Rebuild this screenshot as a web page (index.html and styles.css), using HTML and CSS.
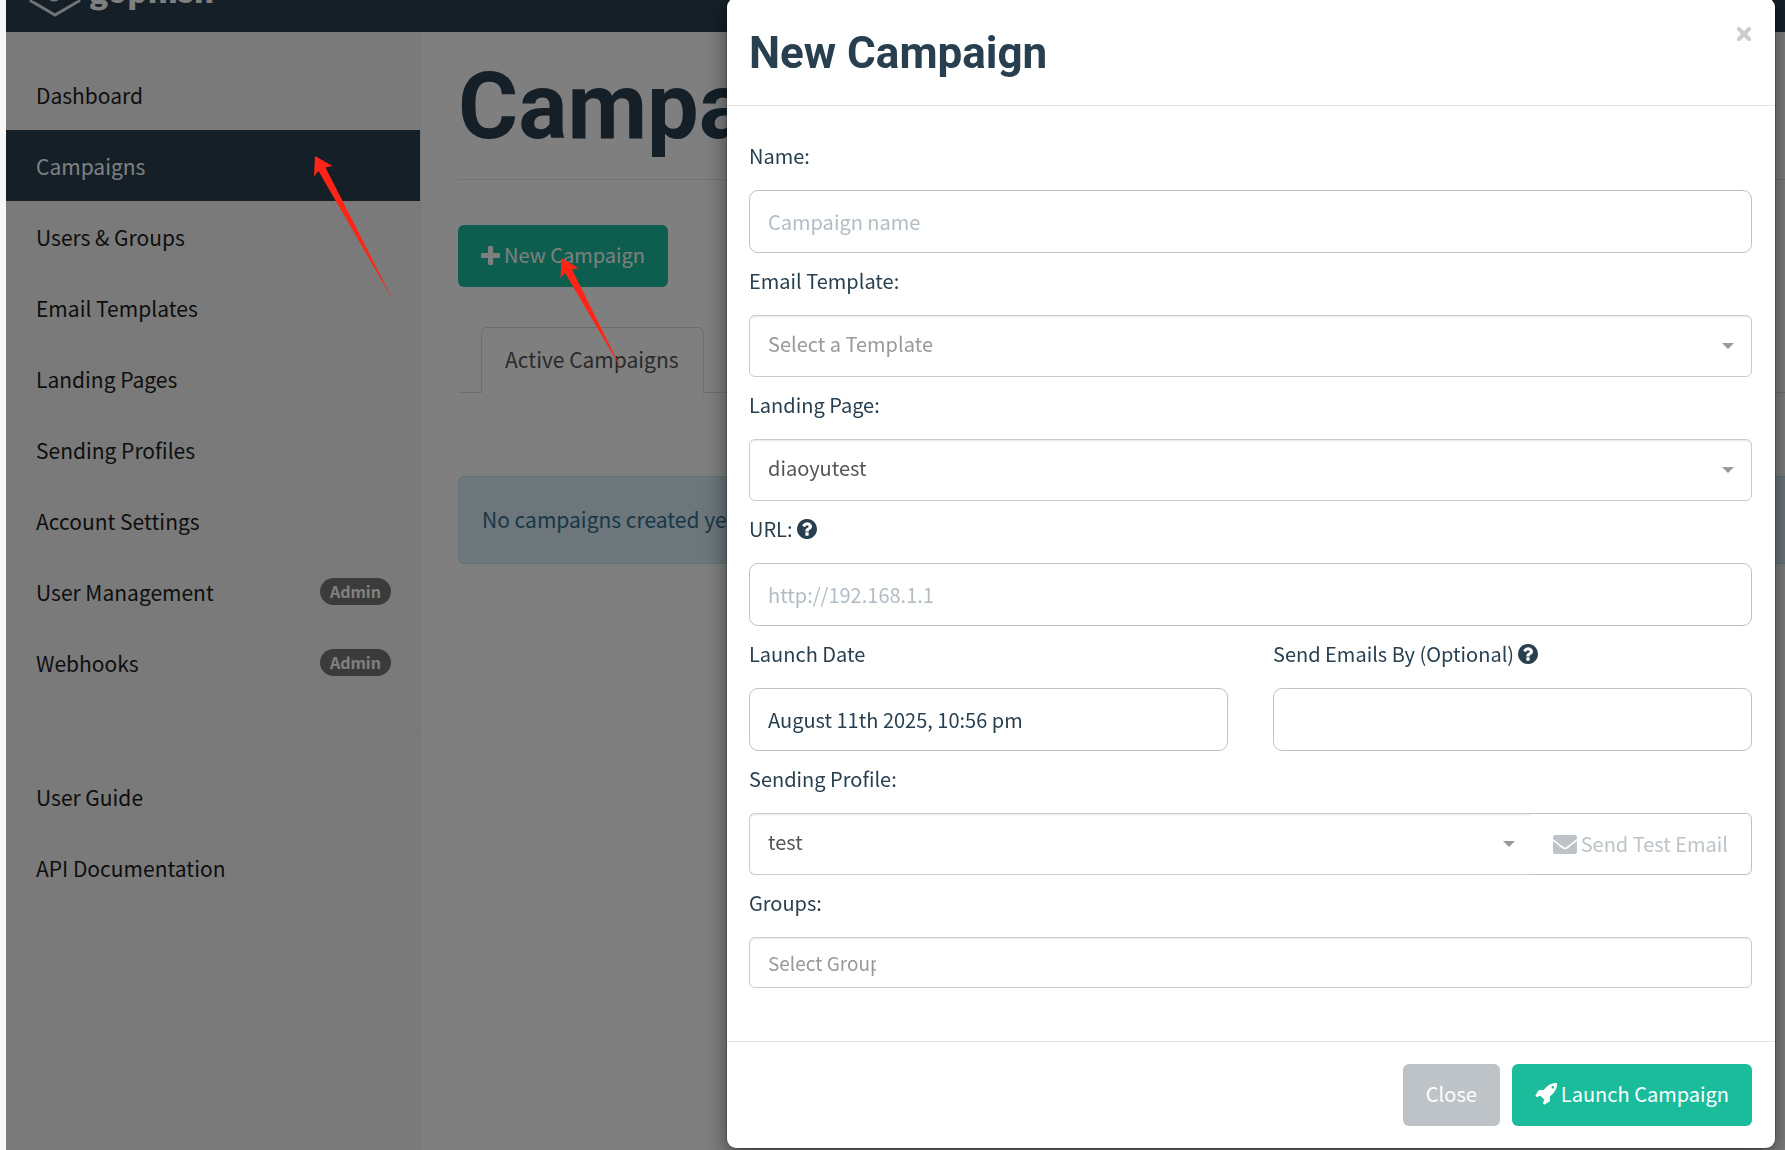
FILE: index.html
```html
<!DOCTYPE html>
<html lang="en">
<head>
  <meta charset="UTF-8" />
  <meta name="viewport" content="width=device-width, initial-scale=1.0" />
  <title>Campaigns - Gophish</title>
  <link rel="stylesheet" href="styles.css">
</head>

<body>
  <div class="app">
    <header class="navbar">
      <a class="brand" href="#">
        <svg class="brand-icon" viewBox="0 0 52 60" aria-hidden="true">
          <path d="M26 2 L50 16 V44 L26 58 L2 44 V16 Z" fill="none" stroke="#e5e8ea" stroke-width="3"/>
          <circle cx="25" cy="37" r="6" fill="none" stroke="#e5e8ea" stroke-width="3"/>
        </svg>
        <span>gophish</span>
      </a>
    </header>

    <div class="layout">
      <nav class="sidebar">
        <a href="#">Dashboard</a>
        <a href="#" class="active">Campaigns</a>
        <a href="#">Users &amp; Groups</a>
        <a href="#">Email Templates</a>
        <a href="#">Landing Pages</a>
        <a href="#">Sending Profiles</a>
        <a href="#">Account Settings</a>
        <a href="#">User Management <span class="badge">Admin</span></a>
        <a href="#">Webhooks <span class="badge">Admin</span></a>
        <hr>
        <a href="#">User Guide</a>
        <a href="#">API Documentation</a>
      </nav>

      <main class="content">
        <h1>Campaigns</h1>
        <button type="button" class="btn btn-primary">
          <svg class="icon-plus" viewBox="192 128 1408 1408" aria-hidden="true"><path d="M1600 736v192q0 40-28 68t-68 28h-416v416q0 40-28 68t-68 28h-192q-40 0-68-28t-28-68v-416h-416q-40 0-68-28t-28-68v-192q0-40 28-68t68-28h416v-416q0-40 28-68t68-28h192q40 0 68 28t28 68v416h416q40 0 68 28t28 68z"/></svg>
          New Campaign
        </button>
        <div class="tabs">
          <a href="#" class="tab">Active Campaigns</a>
        </div>
        <div class="alert">No campaigns created yet. Let's create one!</div>
      </main>
    </div>
  </div>

  <div class="backdrop">
    <form class="modal" role="dialog" aria-labelledby="modal-title">
      <div class="modal-header">
        <h2 id="modal-title">New Campaign</h2>
        <button type="button" class="close" aria-label="Close">
          <svg viewBox="0 0 14 14" aria-hidden="true"><path d="M2 2 L12 12 M12 2 L2 12"/></svg>
        </button>
      </div>

      <div class="modal-body">
        <label for="name">Name:</label>
        <input type="text" id="name" class="form-control" placeholder="Campaign name">

        <label for="template">Email Template:</label>
        <div class="select">
          <select id="template" class="empty">
            <option>Select a Template</option>
          </select>
        </div>

        <label for="page">Landing Page:</label>
        <div class="select">
          <select id="page">
            <option>diaoyutest</option>
          </select>
        </div>

        <label for="url">URL:
          <svg class="icon-help" viewBox="0 0 1536 1536" aria-hidden="true"><path d="M896 1248v-192q0-14-9-23t-23-9h-192q-14 0-23 9t-9 23v192q0 14 9 23t23 9h192q14 0 23-9t9-23zm256-672q0-88-55.500-163t-138.500-116-170-41q-243 0-371 213-15 24 8 42l132 100q7 6 19 6 16 0 25-12 53-68 86-92 34-24 86-24 48 0 85.500 26t37.500 59q0 38-20 61t-68 45q-63 28-115.500 86.500t-52.500 125.500v36q0 14 9 23t23 9h192q14 0 23-9t9-23q0-19 21.500-49.500t54.500-49.500q32-18 49-28.500t46-35 44.500-48 28-60.500 12.500-81zm384 192q0 209-103 385.500t-279.500 279.500-385.500 103-385.500-103-279.500-279.500-103-385.500 103-385.500 279.500-279.500 385.500-103 385.500 103 279.500 279.500 103 385.500z"/></svg>
        </label>
        <input type="text" id="url" class="form-control" placeholder="http://192.168.1.1">

        <div class="row">
          <div class="col">
            <label for="launch">Launch Date</label>
            <input type="text" id="launch" class="form-control" value="August 11th 2025, 10:56 pm">
          </div>
          <div class="col">
            <label for="send-by">Send Emails By (Optional)
              <svg class="icon-help" viewBox="0 0 1536 1536" aria-hidden="true"><path d="M896 1248v-192q0-14-9-23t-23-9h-192q-14 0-23 9t-9 23v192q0 14 9 23t23 9h192q14 0 23-9t9-23zm256-672q0-88-55.500-163t-138.500-116-170-41q-243 0-371 213-15 24 8 42l132 100q7 6 19 6 16 0 25-12 53-68 86-92 34-24 86-24 48 0 85.500 26t37.500 59q0 38-20 61t-68 45q-63 28-115.500 86.500t-52.500 125.500v36q0 14 9 23t23 9h192q14 0 23-9t9-23q0-19 21.500-49.500t54.500-49.500q32-18 49-28.500t46-35 44.500-48 28-60.500 12.500-81zm384 192q0 209-103 385.500t-279.500 279.500-385.500 103-385.500-103-279.500-279.500-103-385.500 103-385.500 279.500-279.500 385.500-103 385.500 103 279.500 279.500 103 385.500z"/></svg>
            </label>
            <input type="text" id="send-by" class="form-control">
          </div>
        </div>

        <label for="profile">Sending Profile:</label>
        <div class="input-group">
          <div class="select">
            <select id="profile">
              <option>test</option>
            </select>
          </div>
          <button type="button" class="btn btn-test">
            <svg class="icon-mail" viewBox="0 64 512 384" preserveAspectRatio="none" aria-hidden="true"><path d="M502.300 190.800c3.900-3.100 9.700-.2 9.700 4.700V400c0 26.500-21.500 48-48 48H48c-26.500 0-48-21.500-48-48V195.600c0-5 5.700-7.800 9.700-4.700 22.400 17.400 52.100 39.500 154.100 113.600 21.100 15.400 56.700 47.800 92.200 47.600 35.700.3 72-32.800 92.300-47.600 102-74.100 131.600-96.300 154-113.700zM256 320c23.200.4 56.600-29.200 73.400-41.400 132.700-96.300 142.800-104.700 173.400-128.700 5.800-4.500 9.200-11.500 9.200-18.900v-19c0-26.500-21.500-48-48-48H48c-26.500 0-48 21.500-48 48v19c0 7.400 3.400 14.300 9.200 18.900 30.600 23.900 40.700 32.400 173.400 128.700 16.800 12.200 50.200 41.800 73.400 41.400z"/></svg>
            Send Test Email
          </button>
        </div>

        <label for="groups">Groups:</label>
        <div class="tags">
          <input type="text" id="groups" placeholder="Select Group">
        </div>
      </div>

      <div class="modal-footer">
        <button type="button" class="btn btn-default">Close</button>
        <button type="button" class="btn btn-primary">
          <svg class="icon-rocket" viewBox="0 128 1664 1664" aria-hidden="true"><path d="M1440 448q0-40-28-68t-68-28-68 28-28 68 28 68 68 28 68-28 28-68zm224-288q0 249-75.500 430.500t-253.500 360.500q-81 80-195 176l-20 379q-2 16-16 26l-384 224q-7 4-16 4-12 0-23-9l-64-64q-13-14-8-32l85-276-281-281-276 85q-3 1-9 1-14 0-23-9l-64-64q-17-19-5-39l224-384q10-14 26-16l379-20q96-114 176-195 188-187 358-258t431-71q14 0 24 9.500t10 22.500z"/></svg>
          Launch Campaign
        </button>
      </div>
    </form>
  </div>

  <svg class="arrows" width="700" height="400" aria-hidden="true">
    <path d="M315 156 L332.500 166 L325.500 167.500 L393 300 L318.500 171 L314 176.500 Z"/>
    <path d="M561.500 258 L578.500 268 L572 269.500 L622 370 L565 273 L560.500 278 Z"/>
  </svg>
</body>
</html>
```

FILE: styles.css
```css
* {
  box-sizing: border-box;
}
body {
  margin: 0;
  padding-left: 6px;
  height: 100vh;
  overflow: hidden;
  background: #f7f7f7;
  color: #283f50;
  font-family: "Noto Sans CJK SC", "Source Sans Pro", sans-serif;
  font-size: 20px;
  line-height: 30px;
}
a {
  text-decoration: none;
}
svg {
  fill: currentColor;
}
input, select, button {
  font: inherit;
  color: inherit;
}

/* page behind the dialog, scrolled down a little */
.app {
  height: 100vh;
  overflow: hidden;
  display: flex;
  flex-direction: column;
  background: #fff;
}
.navbar {
  flex: none;
  height: 75px;
  margin-top: -43px;
  padding-left: 23px;
  background: #283f50;
}
.brand {
  display: flex;
  align-items: center;
  gap: 8px;
  color: #fff;
  font-size: 31px;
  font-weight: 900;
}
.brand-icon {
  width: 52px;
  height: 60px;
}
.brand span {
  padding-top: 6px;
}
.layout {
  flex: 1;
  display: flex;
}
.sidebar {
  flex: none;
  width: 415px;
  padding-top: 27px;
  background: #f5f5f5;
  border-right: 1px solid #eee;
}
.sidebar a {
  display: flex;
  justify-content: space-between;
  align-items: center;
  height: 71px;
  padding: 0 29px 0 30px;
  color: #1c1c1c;
  font-size: 21px;
}
.sidebar a.active {
  background: #283f50;
  color: #fff;
}
.sidebar hr {
  margin: 32px 0 30px;
  border: 0;
  border-top: 1px solid #eee;
}
.badge {
  padding: 0 10px;
  border-radius: 15px;
  background: #777;
  color: #fff;
  font-size: 16px;
  font-weight: bold;
  line-height: 27px;
}
.content {
  flex: 1;
  min-width: 0;
  padding-left: 37px;
}
h1, h2 {
  margin: 0;
  font-family: Roboto, sans-serif;
  font-weight: bold;
}
h1 {
  margin-bottom: 45px;
  padding: 25px 0 22px;
  border-bottom: 1px solid #e7e7e7;
  font-size: 92px;
  line-height: 100px;
}
.btn {
  display: inline-flex;
  align-items: center;
  gap: 4px;
  height: 62px;
  padding: 0 23px 2px;
  border: 0;
  border-radius: 6px;
  cursor: pointer;
}
.btn-primary {
  background: #1abc9c;
  color: #fff;
}
.btn-default {
  background: #bdc3c7;
  color: #fff;
}
.tabs {
  display: flex;
  margin-top: 40px;
  padding-left: 23px;
  border-bottom: 1px solid #ddd;
}
.tab {
  margin-bottom: -1px;
  padding: 16px 24px 19px 23px;
  border: 1px solid #ddd;
  border-bottom: 0;
  border-radius: 6px 6px 0 0;
  background: #fff;
  color: #555;
  font-size: 21px;
}
.alert {
  margin-top: 83px;
  padding: 27px 23px 29px;
  border: 1px solid #bce8f1;
  border-right: 0;
  border-radius: 6px 0 0 6px;
  background: #d9edf7;
  color: #31708f;
  font-size: 21px;
  white-space: nowrap;
}

/* dialog */
.backdrop {
  position: fixed;
  inset: 0 0 0 6px;
  background: rgba(0, 0, 0, 0.5);
}
.modal {
  margin: -2px 10px 0 721px;
  border-radius: 9px;
  background: #fff;
  box-shadow: 0 8px 23px rgba(0, 0, 0, 0.5), 0 0 0 1px rgba(0, 0, 0, 0.2);
}
.modal-header {
  display: flex;
  justify-content: space-between;
  align-items: flex-start;
  padding: 25px 23px 22px 22px;
  border-bottom: 1px solid #e5e5e5;
}
h2 {
  font-size: 44px;
  line-height: 60px;
}
.close {
  padding: 4px 1px;
  border: 0;
  background: none;
  line-height: 14px;
}
.close svg {
  display: block;
  width: 14px;
  height: 14px;
  stroke: #ccc;
  stroke-width: 4;
  stroke-linecap: round;
}
.modal-body {
  padding: 22px 23px 53px 22px;
}
label {
  display: flex;
  align-items: center;
  gap: 4px;
  height: 62px;
  padding-bottom: 6px;
}
.form-control {
  display: block;
  width: 100%;
  height: 63px;
  padding: 0 18px;
  border: 1px solid #bdc3c7;
  border-radius: 9px;
  background: #fff;
}
.form-control::placeholder {
  color: #b2bcc5;
  opacity: 1;
}
.select {
  position: relative;
}
.select select {
  display: block;
  width: 100%;
  height: 62px;
  padding: 0 18px 4px;
  border: 1px solid #ccc;
  border-radius: 6px;
  background: #fff;
  box-shadow: inset 0 2px 2px -1px rgba(0, 0, 0, 0.1);
  color: #555;
  appearance: none;
}
.select .empty {
  color: #999;
}
.select::after {
  content: "";
  position: absolute;
  top: 28px;
  right: 18px;
  border: 6px solid transparent;
  border-top-color: #999;
  border-bottom: 0;
}
.row {
  display: flex;
  gap: 45px;
}
.col {
  flex: 1;
}
.input-group {
  display: flex;
}
.input-group .select {
  flex: 1;
}
.input-group .select::after {
  right: 15px;
}
.input-group select {
  border-right: 0;
  border-radius: 6px 0 0 6px;
}
.btn-test {
  padding-bottom: 0;
  border: 1px solid #bdc3c7;
  border-left: 0;
  border-radius: 0 6px 6px 0;
  background: #fff;
  color: #bdc3c7;
}
.tags {
  height: 51px;
  padding: 0 18px;
  border: 1px solid #ccc;
  border-radius: 6px;
  box-shadow: inset 0 2px 2px -1px rgba(0, 0, 0, 0.1);
}
.tags input {
  display: block;
  width: 108px;
  height: 48px;
  padding: 0;
  border: 0;
  background: none;
  font-size: 19px;
}
.tags input::placeholder {
  color: #999;
  opacity: 1;
}
.modal-footer {
  display: flex;
  justify-content: flex-end;
  gap: 12px;
  padding: 22px 23px 22px 22px;
  border-top: 1px solid #e5e5e5;
}
.icon-plus {
  width: 19px;
  height: 19px;
}
.icon-help {
  width: 20px;
  height: 20px;
}
.icon-mail {
  width: 24px;
  height: 19px;
}
.icon-rocket {
  width: 22px;
  height: 22px;
}

/* pointers drawn over the page */
.arrows {
  position: fixed;
  top: 0;
  left: 0;
  fill: #ff2415;
  pointer-events: none;
}

@media (max-width: 1200px) {
  .modal {
    margin-left: 10px;
  }
}
```
